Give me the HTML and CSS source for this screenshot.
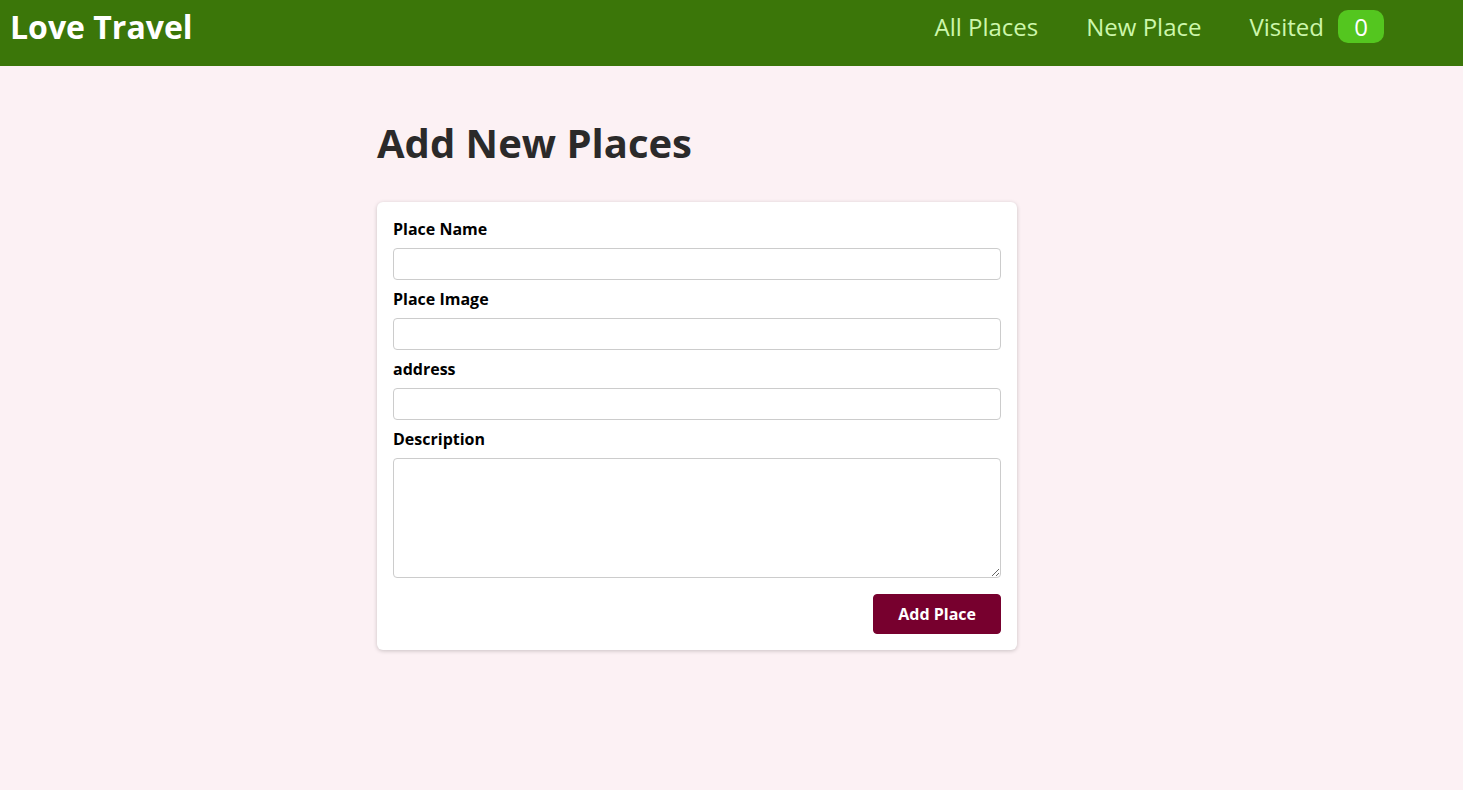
FILE: index.html
```html
<!DOCTYPE html>
<html lang="en">
<head>
<meta charset="utf-8">
<title>Love Travel</title>
<link rel="stylesheet" href="styles.css">
</head>
<body>
<header class="header">
  <div class="logo">Love Travel</div>
  <nav>
    <ul class="nav-list">
      <li><a href="#">All Places</a></li>
      <li><a href="#">New Place</a></li>
      <li><a href="#">Visited <span class="badge">0</span></a></li>
    </ul>
  </nav>
</header>
<main class="main">
  <section>
    <h1 class="title">Add New Places</h1>
    <div class="card">
      <form class="form">
        <div class="control">
          <label for="name">Place Name</label>
          <input type="text" id="name">
        </div>
        <div class="control">
          <label for="image">Place Image</label>
          <input type="url" id="image">
        </div>
        <div class="control">
          <label for="address">address</label>
          <input type="text" id="address">
        </div>
        <div class="control">
          <label for="description">Description</label>
          <textarea id="description" rows="5"></textarea>
        </div>
        <div class="actions">
          <button type="button" class="btn">Add Place</button>
        </div>
      </form>
    </div>
  </section>
</main>
</body>
</html>
```

FILE: styles.css
```css
* { box-sizing: border-box; }
body {
  margin: 0;
  font-family: "Open Sans", "Noto Sans", sans-serif;
  background: #fcf1f4;
  color: #000;
}
.header {
  height: 66px;
  background: #3b7609;
  display: flex;
  align-items: center;
  justify-content: space-between;
  padding: 0 79px 14px 10px;
}
.logo {
  font-size: 32px;
  font-weight: bold;
  color: #fff;
}
.nav-list {
  list-style: none;
  margin: 0;
  padding: 0;
  display: flex;
  align-items: center;
}
.nav-list li { margin-left: 48px; }
.nav-list a {
  text-decoration: none;
  font-size: 24px;
  color: #cdf7ab;
}
.badge {
  display: inline-block;
  background: #54c61f;
  color: #fff;
  border-radius: 10px;
  padding: 0 16px;
  margin-left: 8px;
  line-height: 33px;
}
.main {
  max-width: 640px;
  margin: 48px 0 48px 377px;
}
.title {
  font-size: 40px;
  color: #2b2a2a;
  margin: 0 0 32px;
  padding-top: 1px;
}
.card {
  background: #fff;
  border-radius: 6px;
  box-shadow: 0 1px 4px rgba(0,0,0,0.2);
}
.form { padding: 16px; }
.control { margin-bottom: 8px; }
.control label {
  display: block;
  font-weight: bold;
  margin-bottom: 8px;
  font-size: 16px;
}
.control input,
.control textarea {
  display: block;
  font: inherit;
  border-radius: 4px;
  border: 1px solid #ccc;
  padding: 4px;
  width: 100%;
  background: #fff;
}
.actions {
  margin-top: 16px;
  text-align: right;
}
.btn {
  font: inherit;
  cursor: pointer;
  background: #77002e;
  color: #fff;
  padding: 8px 24px;
  border: 1px solid #77002e;
  border-radius: 4px;
  font-weight: bold;
}
```
